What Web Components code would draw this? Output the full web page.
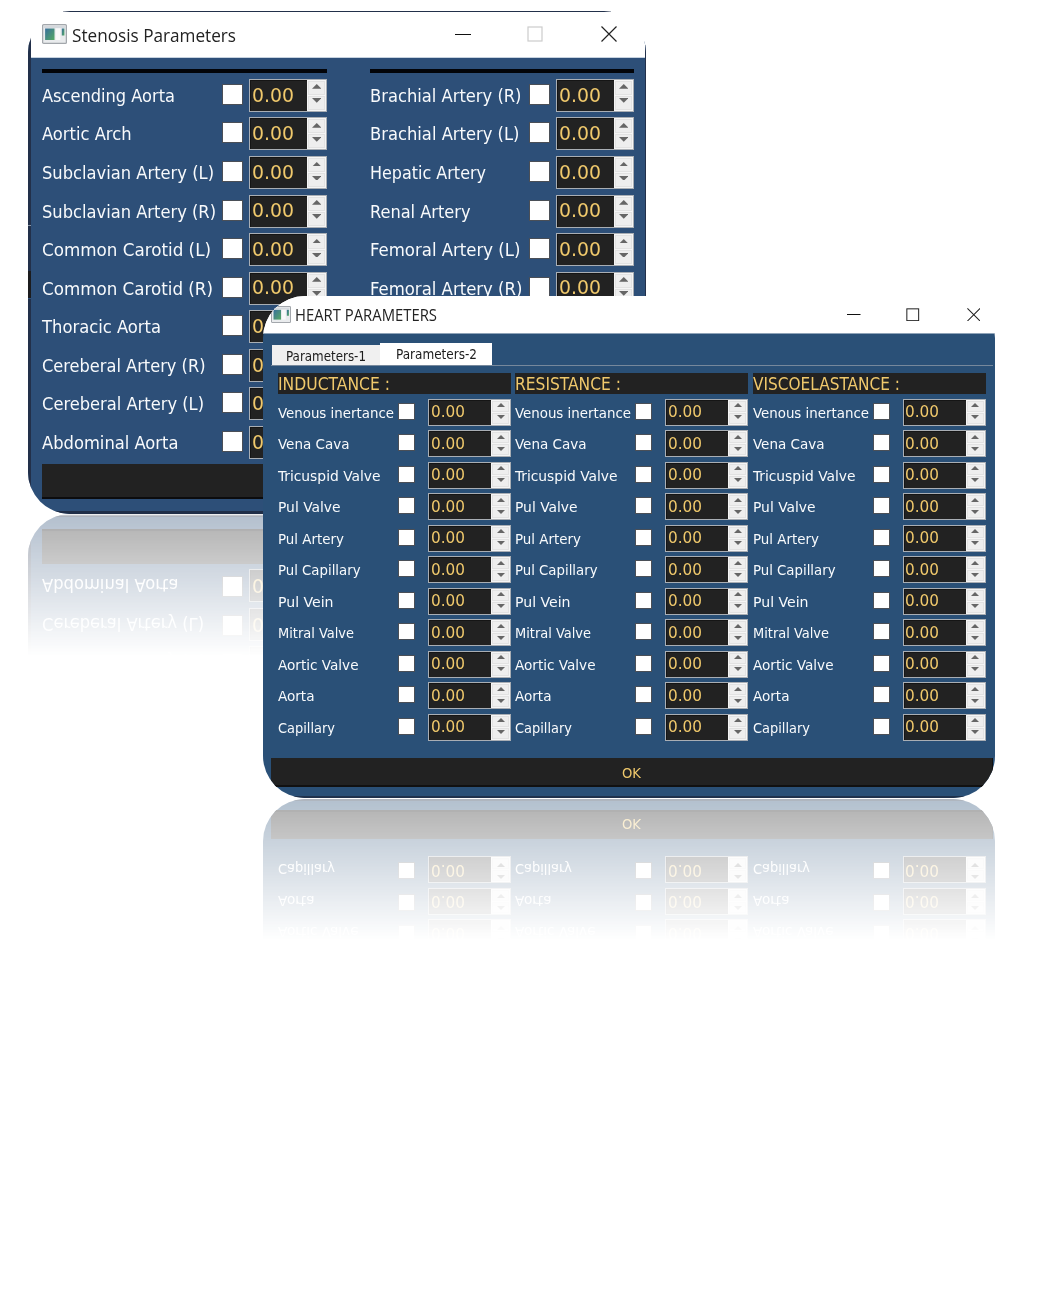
<!DOCTYPE html>
<html lang="en">
<head>
<meta charset="utf-8">
<title>Parameters</title>
<style>
html,body{margin:0;background:#fff}
body{width:1039px;height:1303px;position:relative;overflow:hidden;font-family:"DejaVu Sans Condensed","DejaVu Sans","Noto Sans",sans-serif}
stenosis-window{position:absolute;left:28px;top:11px}
heart-window{position:absolute;left:263px;top:296px}
</style>
</head>
<body>
<stenosis-window></stenosis-window>
<heart-window></heart-window>
<script>
const make = (tag, render, after) => customElements.define(tag, class extends HTMLElement {
  connectedCallback() {
    if (this.shadowRoot) return;
    this.attachShadow({mode: 'open'}).innerHTML = render(this);
    if (after) after(this);
  }
});

/* Text condensed or widened horizontally to fill exactly `w` pixels */
make('fit-text', () => `<style>
  :host{display:block;white-space:nowrap;flex:none}
  span{display:inline-block;transform-origin:0 50%}
</style><span><slot></slot></span>`, el => {
  const w = +el.getAttribute('w');
  const s = el.shadowRoot.querySelector('span');
  const natural = s.getBoundingClientRect().width;
  s.style.transform = `scaleX(${w / natural})`;
  el.style.width = w + 'px';
});

make('check-box', () => `<style>
  :host{display:block;flex:none;box-sizing:border-box;width:var(--check);height:var(--check);background:#fff;border:1px solid #4a4f57}
</style>`);

make('spin-box', el => `<style>
  :host{display:flex;flex:none;box-sizing:border-box;width:var(--spin-w);height:var(--spin-h);border:1px solid #a9aeb4;background:#222;color:#f0c96c;font-size:var(--num)}
  .v{flex:1;display:flex;align-items:center;padding-left:1.5px;box-shadow:inset 1px 1px #151515;line-height:1}
  .b{width:var(--btn);display:flex;flex-direction:column;background:#f5f5f5;padding:1px;box-sizing:border-box;gap:1px}
  .b div{flex:1;display:flex;align-items:center;justify-content:center;background:#eee;border:1px solid #e2e2e2;box-sizing:border-box;min-height:0}
  .b div:first-child svg{margin-top:-2px}
  .b div:last-child svg{margin-top:var(--down,-2px)}
  svg{width:var(--arrow);height:calc(var(--arrow) / 2);display:block}
</style><div class="v"><fit-text w="${el.getAttribute('nw')}">0.00</fit-text></div>
<div class="b"><div><svg viewBox="0 0 10 5"><path d="M0 5L5 0L10 5Z" fill="#666"/></svg></div>
<div><svg viewBox="0 0 10 5"><path d="M0 0L5 5L10 0Z" fill="#666"/></svg></div></div>`);

make('param-row', el => `<style>
  :host{display:flex;align-items:center;height:var(--row);color:#f8fafc;font-size:var(--label);line-height:1}
  .l{flex:1;min-width:0;padding-top:var(--drop,1px)}
  check-box{margin-right:var(--gap);position:relative;top:-1px}
</style><div class="l"><fit-text w="${el.getAttribute('w')}">${el.getAttribute('label')}</fit-text></div>
<check-box></check-box><spin-box nw="${el.getAttribute('nw')}"></spin-box>`);

make('app-icon', () => `<style>:host{display:block;flex:none}svg{display:block;width:100%;height:100%}</style>
<svg viewBox="0 0 24 20" preserveAspectRatio="none"><defs><linearGradient id="g" x1="0" y1="0" x2="1" y2="1"><stop offset="0" stop-color="#386f9c"/><stop offset="1" stop-color="#55aa63"/></linearGradient></defs>
<rect x=".6" y=".6" width="22.8" height="18.8" rx="1" fill="#e9ebed" stroke="#a3a7ac" stroke-width="1.2"/>
<rect x="2" y="2" width="20" height="2" fill="#d4d8dd"/>
<rect x="3" y="4.5" width="9" height="11.5" fill="url(#g)"/><rect x="13.2" y="4.5" width="4.4" height="11.5" fill="#f9f9f9"/><rect x="19" y="4.5" width="2.5" height="7" fill="url(#g)"/></svg>`);

make('window-controls', el => `<style>:host{display:flex;align-items:center;flex:none}svg{display:block;flex:none}</style>
<svg width="${el.getAttribute('s')}" height="16" viewBox="0 0 16 16" preserveAspectRatio="none"><path d="M0 ${el.getAttribute('ly')}H16" stroke="#111" stroke-width="1.1"/></svg>
<svg style="margin-left:${el.getAttribute('g1')}px" width="${el.getAttribute('s')}" height="${el.getAttribute('s')}" viewBox="0 0 16 16"><rect x="1" y="1" width="14" height="14" fill="none" stroke="${el.getAttribute('box')}" stroke-width="1.2"/></svg>
<svg style="margin-left:${el.getAttribute('g2')}px" width="${el.getAttribute('s')}" height="${el.getAttribute('s')}" viewBox="0 0 16 16"><path d="M.5 .5L15.5 15.5M15.5 .5L.5 15.5" fill="none" stroke="#222" stroke-width="1.2"/></svg>`);

const rows = (list, x, nw) => list.map(([t, end]) =>
  `<param-row label="${t}" w="${end - x}" nw="${nw}"></param-row>`).join('');

const left = [['Ascending Aorta',175],['Aortic Arch',131.5],['Subclavian Artery (L)',214],['Subclavian Artery (R)',216],['Common Carotid (L)',211],['Common Carotid (R)',213],['Thoracic Aorta',161],['Cereberal Artery (R)',205.5],['Cereberal Artery (L)',204],['Abdominal Aorta',178.5]];
const right = [['Brachial Artery (R)',521.5],['Brachial Artery (L)',519.5],['Hepatic Artery',486],['Renal Artery',470.5],['Femoral Artery (L)',520.5],['Femoral Artery (R)',522.5]];

make('stenosis-window', () => `<style>
  :host{display:flex;flex-direction:column;box-sizing:border-box;width:618px;height:503px;border-radius:42px;overflow:hidden;background:linear-gradient(#fff 30px,#2d4f78 0);
    --check:21px;--spin-w:78px;--spin-h:33px;--num:19.5px;--btn:19px;--arrow:9.5px;--down:-4px;--row:38.58px;--label:18px;--gap:6px;
    -webkit-box-reflect:below 0 linear-gradient(transparent 361px,rgba(0,0,0,.36) 501px,transparent 503px)}
  .frame{flex:1;display:flex;flex-direction:column;min-height:0;box-shadow:inset 0 -3px #1f2e48;background:linear-gradient(#22304a,#22304a) 0 22px/3px 100% no-repeat,linear-gradient(#22304a,#22304a) 100% 34px/1px 100% no-repeat;position:relative}
  header{height:47px;flex:none;background:linear-gradient(#22304a,#22304a) 32px 0/548px 1px no-repeat #fff;border-bottom:1px solid #c6d2df;box-sizing:border-box;display:flex;align-items:center;margin:0 1px 0 3px;padding-left:11px;color:#222;font:18.5px/1 "Open Sans",sans-serif}
  app-icon{width:25px;height:20px;margin:0 5px 0 0}
  header fit-text{padding-top:3px}
  window-controls{margin-left:auto;margin-right:28px}
  .cols{display:flex;padding:11px 12px 0 14px;height:406px;flex:none;box-sizing:border-box;justify-content:space-between}
  .c{border-top:4px solid #020408;padding-top:3px;box-sizing:border-box;height:10px}
  .ok{flex:none;height:35px;margin:0 12px 0 14px;background:#222;border-bottom:2px solid #0c0c0e;box-sizing:border-box}
  .edge{position:absolute;left:0;top:214px;width:3px;height:74px;background:linear-gradient(#8794a5 0 1px,#22304a 1px 46px,#1c1c1e 46px 73px,#2d4f78 73px)}
</style><div class="frame"><header><app-icon></app-icon><fit-text w="164">Stenosis Parameters</fit-text>
<window-controls s="16" g1="56" g2="58" box="#ccc" ly="8.5"></window-controls></header>
<div class="cols"><div class="c" style="width:285px">${rows(left,42,42)}</div><div class="c" style="width:264px">${rows(right,370,42)}</div></div>
<div class="ok"></div><div class="edge"></div></div>`);

const heart = [['Venous inertance',394],['Vena Cava',349.5],['Tricuspid Valve',380.5],['Pul Valve',340.5],['Pul Artery',344],['Pul Capillary',360.5],['Pul Vein',333.5],['Mitral Valve',354],['Aortic Valve',358.5],['Aorta',314.5],['Capillary',335]];

make('param-section', el => `<style>
  :host{display:block;width:233px}
  h2{margin:0 0 2.5px;height:21px;background:#222;color:#f0c96c;font-weight:400;font-size:16.8px;line-height:22px}
</style><h2><fit-text w="${el.getAttribute('w')}">${el.getAttribute('name')} :</fit-text></h2>${rows(heart,278,34)}`);

make('heart-window', () => `<style>
  :host{display:flex;flex-direction:column;box-sizing:border-box;width:732px;height:502px;border-radius:42px;overflow:hidden;background:linear-gradient(#fff 37px,#2a5077 0);
    --check:17px;--spin-w:83px;--spin-h:27px;--num:16.5px;--btn:19px;--arrow:8px;--row:31.5px;--label:14.8px;--gap:13px;--drop:2px;
    -webkit-box-reflect:below 1px linear-gradient(transparent 361px,rgba(0,0,0,.36) 502px)}
  header{height:38px;flex:none;background:#fff;border-bottom:1px solid #8fa3b8;box-sizing:border-box;display:flex;align-items:center;padding-left:8px;color:#222;font:15.6px/1 "Open Sans",sans-serif}
  app-icon{width:20px;height:17px;margin:0 4px 1px 0}
  header fit-text{padding-top:2px}
  window-controls{margin-left:auto;margin-right:15px}
  .tabs{display:flex;align-items:flex-end;height:32px;flex:none;box-sizing:border-box;margin:0 2px 0 8px;border-bottom:1px solid #76889c;padding-left:1px;font-size:13.8px;color:#1c1c1c;line-height:1}
  .t{height:20px;width:108px;background:#f0f0f0;box-sizing:border-box;padding:5px 0 0 14px}
  .t.on{height:22px;width:112px;background:#fff;padding:5px 0 0 16px}
  .secs{display:flex;justify-content:space-between;padding:7px 9.4px 0 15px;height:392px;box-sizing:border-box}
  .ok{flex:none;height:29px;margin:0 2px 0 8px;background:#222;border-bottom:2px solid #111;border-right:1px solid #111;box-sizing:border-box;color:#f0c96c;font-size:13.6px;line-height:1;display:flex;justify-content:center;align-items:center;padding-top:4px}
  .base{margin-top:auto;height:2px;background:#20324c}
</style><header><app-icon></app-icon><fit-text w="142">HEART PARAMETERS</fit-text>
<window-controls s="13.5" g1="45.5" g2="47" box="#222" ly="7.5"></window-controls></header>
<div class="tabs"><div class="t"><fit-text w="80">Parameters-1</fit-text></div><div class="t on"><fit-text w="81">Parameters-2</fit-text></div></div>
<div class="secs"><param-section name="INDUCTANCE" w="112"></param-section><param-section name="RESISTANCE" w="106"></param-section><param-section name="VISCOELASTANCE" w="147"></param-section></div>
<div class="ok"><fit-text w="19">OK</fit-text></div><div class="base"></div>`);
</script>
</body>
</html>
